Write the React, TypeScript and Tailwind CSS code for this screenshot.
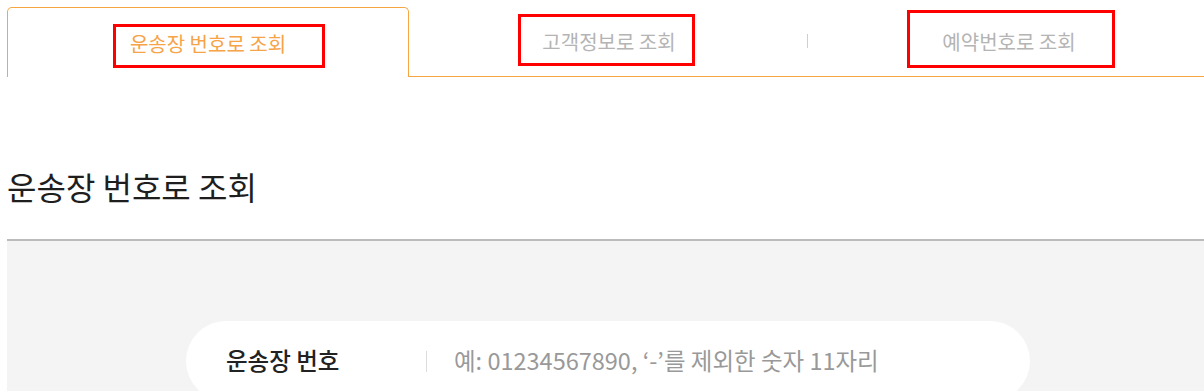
import React from 'react';

const tabs = ['운송장 번호로 조회', '고객정보로 조회', '예약번호로 조회'];

// red annotation boxes drawn over the screenshot
const marks = [
    { left: 113, top: 24, width: 212, height: 44 },
    { left: 518, top: 14, width: 177, height: 52 },
    { left: 907, top: 10, width: 208, height: 58 },
];

const App: React.FC = () => {
    return (
        <div
            className="relative w-[1204px] h-[391px] overflow-hidden bg-white"
            style={{ fontFamily: '"Noto Sans CJK KR", "Noto Sans", sans-serif' }}
        >
            <div className="ml-[7px] w-[1202px]">
                <div className="mt-[7px] flex h-[70px]">
                    {tabs.map((tab, i) => {
                        const active = i === 0;
                        return (
                            <div
                                key={tab}
                                className={`relative flex flex-1 items-center justify-center text-[20px] ${
                                    active
                                        ? 'rounded-t-[5px] border border-b-0 border-[#f5a642] text-[#f6a447]'
                                        : 'border-b border-[#f5a642] text-[#b4b4b4]'
                                }`}
                            >
                                {i === 2 && (
                                    <span className="absolute -left-[2px] top-[27px] h-[14px] w-px bg-[#cfcfcf]" />
                                )}
                                <span className={active ? 'mt-[2px]' : 'mt-0'}>{tab}</span>
                            </div>
                        );
                    })}
                </div>

                <h2 className="mt-[87px] pb-[30px] text-[32px] leading-[45px] font-normal text-[#1e1e1e] border-b-2 border-[#bbbbbb]">
                    운송장 번호로 조회
                </h2>

                <div className="bg-[#f4f4f4] pt-[80px] pb-[40px]">
                    <div className="mx-auto flex h-[80px] w-[844px] items-center rounded-[40px] bg-white pl-[40px]">
                        <span className="w-[200px] text-[23.5px] font-medium text-[#222222]">운송장 번호</span>
                        <span className="h-[21px] w-px bg-[#dddddd]" />
                        <input
                            className="ml-[27px] flex-1 bg-transparent text-[23.5px] text-[#333] outline-none placeholder:text-[#999999]"
                            placeholder="예: 01234567890, ‘-’를 제외한 숫자 11자리"
                        />
                    </div>
                </div>
            </div>

            {marks.map((m, i) => (
                <div
                    key={i}
                    className="pointer-events-none absolute border-[3px] border-[#ff0000]"
                    style={{ left: m.left, top: m.top, width: m.width, height: m.height }}
                />
            ))}
        </div>
    );
};

export default App;
